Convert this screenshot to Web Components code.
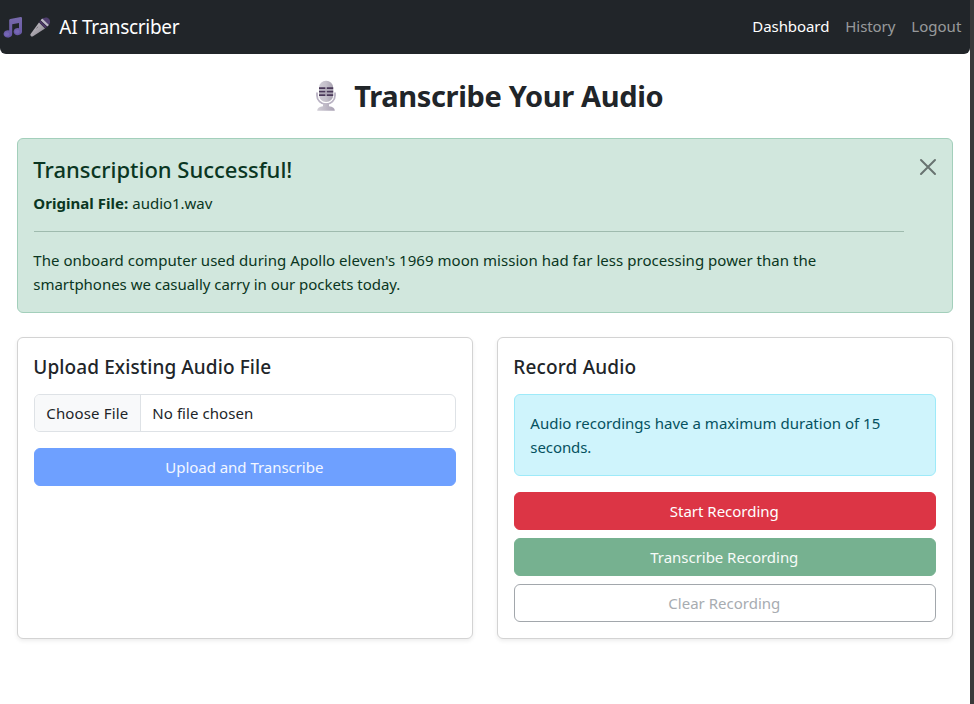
<!DOCTYPE html>
<html lang="en">
<head>
<meta charset="utf-8">
<title>AI Transcriber</title>
<style>
html,body{margin:0;height:100%}
body{background:#3a3a3a;font-family:"Noto Sans","Open Sans",sans-serif;font-size:15px;line-height:24px;color:#212529;overflow:hidden}
</style>
</head>
<body>
<transcriber-app></transcriber-app>
<script>
const define = (name, html, setup) => customElements.define(name, class extends HTMLElement {
  constructor() {
    super();
    this.attachShadow({ mode: 'open' }).innerHTML = html;
  }
  connectedCallback() { if (setup) setup(this); }
});

/* A single line of text tracked to a set width. */
define('fit-text', `<style>:host{display:inline-block;white-space:nowrap;vertical-align:top;margin:0 .7px 0 -.7px}</style><slot></slot>`, el => {
  const target = parseFloat(el.getAttribute('w'));
  const natural = el.getBoundingClientRect().width;
  el.style.letterSpacing = ((target - natural) / el.textContent.length) + 'px';
  el.style.width = target + 'px';
});

define('note-icon', `<style>:host{display:block;width:20px;height:21px}svg{display:block}</style>
<svg width="20" height="21" viewBox="0 0 20 21"><defs><linearGradient id="g" x1="0" y1="0" x2="0" y2="1"><stop offset="0" stop-color="#7769ab"/><stop offset="1" stop-color="#6656a6"/></linearGradient></defs>
<path fill="url(#g)" d="M6.2 3.2Q6.2 2.1 7.3 1.9L17.7.1Q19 0 19 1.2V14.3A4.2 3.6 0 1 1 16 11.2V6L9.2 7.2V16.7A4.3 3.7 0 1 1 6.2 13.4Z"/>
<ellipse cx="3.8" cy="17.2" rx="2.4" ry="2" fill="#8272c3" opacity=".5"/><ellipse cx="14.2" cy="14.8" rx="2.4" ry="2" fill="#8272c3" opacity=".5"/></svg>`);

define('mic-icon', `<style>:host{display:block;width:21px;height:20px}svg{display:block}</style>
<svg width="21" height="20" viewBox="0 0 21 20"><defs><linearGradient id="g" x1="0" y1="0" x2="1" y2="1"><stop offset="0" stop-color="#c8c5cb"/><stop offset="1" stop-color="#87828c"/></linearGradient></defs>
<path d="M9 5.6 15 11.6 3 19.2Q1.7 19.8.8 18.9T.6 16.9Z" fill="url(#g)"/>
<path d="M11 3.2Q13.2-.2 17 .5 20.5 1.8 20 5.7 19.4 8.7 16.8 9.3Z" fill="#4f3e6e"/>
<path d="M12.2 1.5 18.9 8 17.4 9.6 10.6 3.2Z" fill="#bdb8c6"/><path d="M10.3 3.6 17 9.9 15.2 11.2 9.2 5.3Z" fill="#4b3566"/><path d="M6.5 11.3 8.2 9.7" stroke="#77727c" stroke-width="1"/></svg>`);

define('studio-mic', `<style>:host{display:block;width:22px;height:31px}svg{display:block}</style>
<svg width="22" height="31" viewBox="0 0 22 31"><defs><linearGradient id="g" x1="0" x2="1"><stop offset="0" stop-color="#cfccd4"/><stop offset=".5" stop-color="#c5c1cb"/><stop offset="1" stop-color="#a6a0af"/></linearGradient><linearGradient id="b" x1="0" x2="1"><stop offset="0" stop-color="#d2cfd7"/><stop offset="1" stop-color="#aaa2b4"/></linearGradient></defs>
<path d="M2 13.2V15.4A9 8.8 0 0 0 20 15.4V13.2" fill="none" stroke="#b9b2c3" stroke-width="1.8" stroke-linecap="round"/>
<path d="M8 23.5H14V26.2Q19.8 27 19.8 30.7H2.2Q2.2 27 8 26.2Z" fill="url(#b)"/>
<rect x="4" y=".8" width="14.2" height="21.2" rx="7" fill="url(#g)"/>
<path d="M4 8.2H10.4M11.7 8.2H18.2M4 11.7H10.4M11.7 11.7H18.2M4 15.2H10.4M11.7 15.2H18.2" stroke="#493858" stroke-width="1.8"/><path d="M4 9.9H18.2M4 13.4H18.2" stroke="#a49dad" stroke-width=".8"/></svg>`);

define('nav-link', `<style>:host{display:block;color:rgba(255,255,255,.55)}:host([active]){color:#fff}</style><slot></slot>`);

define('nav-bar', `<style>
:host{display:flex;align-items:center;height:54px;box-sizing:border-box;padding:0 8px 0 3px;background:#212529;border-radius:0 0 6px 6px;color:#fff}
.brand{font-size:19px;line-height:30px;margin-left:9px;flex:1}
mic-icon{margin-left:7px}
nav{display:flex;gap:16px;padding-bottom:2px}
</style>
<note-icon></note-icon><mic-icon></mic-icon><div class="brand"><fit-text w="120">AI Transcriber</fit-text></div>
<nav><nav-link active><fit-text w="77">Dashboard</fit-text></nav-link><nav-link><fit-text w="50">History</fit-text></nav-link><nav-link><fit-text w="50">Logout</fit-text></nav-link></nav>`);

define('success-alert', `<style>
:host{display:flex;box-sizing:border-box;height:175px;padding:16px 15px 16px 16px;border:1px solid #a3cfbb;border-radius:6px;background:#d1e7dd;color:#0a3622;margin-bottom:24px}
.body{width:870px}
h4{margin:0 0 8px;font-size:22px;line-height:28px;font-weight:500}
p{margin:0;height:24px}
b{font-weight:700;margin-right:4px}
hr{margin:16px 0;border:0;border-top:1px solid #0a3622;opacity:.25}
svg{margin:3px 0 0 15px;flex:none}
</style>
<div class="body"><h4><fit-text w="259">Transcription Successful!</fit-text></h4>
<p><b><fit-text w="95">Original File:</fit-text></b><fit-text w="80">audio1.wav</fit-text></p><hr>
<p><fit-text w="783">The onboard computer used during Apollo eleven's 1969 moon mission had far less processing power than the</fit-text></p>
<p><fit-text w="367">smartphones we casually carry in our pockets today.</fit-text></p></div>
<svg width="18" height="18" viewBox="0 0 18 18"><path d="M2 2 16 16M16 2 2 16" stroke="#687370" stroke-width="2" stroke-linecap="round"/></svg>`);

define('panel-card', `<style>
:host{display:block;flex:1;box-sizing:border-box;height:302px;padding:16px;border:1px solid #d3d3d3;border-radius:6px;background:#fff;box-shadow:0 2px 4px rgba(0,0,0,.075)}
</style><slot></slot>`);

define('card-title', `<style>:host{display:block;box-sizing:border-box;font-size:19px;line-height:24px;font-weight:500;height:25px;padding-top:1px;margin-bottom:15px}</style><slot></slot>`);

define('file-field', `<style>
:host{display:flex;box-sizing:border-box;height:38px;border:1px solid #dee2e6;border-radius:6px;margin-bottom:16px;line-height:36px;overflow:hidden}
.pick{background:#f8f9fa;border-right:1px solid #dee2e6;width:93px;padding-left:12px;flex:none}
.name{padding-left:12px}
</style><div class="pick"><fit-text w="82">Choose File</fit-text></div><div class="name"><fit-text w="101">No file chosen</fit-text></div>`);

define('action-button', `<style>
:host{display:block;box-sizing:border-box;height:38px;border:1px solid var(--edge,var(--bg));border-radius:6px;background:var(--bg);color:var(--ink,#fff);line-height:36px;text-align:center;margin-bottom:8px}
:host([kind=primary]){--bg:#6ea0ff;--ink:#f3f7ff}
:host([kind=danger]){--bg:#dc3545}
:host([kind=success]){--bg:#76b190;--ink:#f6fbf8}
:host([kind=outline]){--bg:#fff;--edge:#a2a7ac;--ink:#a7acb1}
</style><slot></slot>`);

define('info-note', `<style>
:host{display:block;box-sizing:border-box;height:82px;padding:16px;border:1px solid #9eeaf9;border-radius:6px;background:#cff4fc;color:#055160;margin-bottom:16px}
div{height:24px}
</style><div><fit-text w="350">Audio recordings have a maximum duration of 15</fit-text></div><div><fit-text w="61">seconds.</fit-text></div>`);

define('page-title', `<style>
:host{display:flex;justify-content:center;height:36px;margin-bottom:24px;padding-left:9px}
h2{margin:0 0 0 18px;font-size:29px;line-height:36px;font-weight:700}
studio-mic{margin-top:2px}
</style><studio-mic></studio-mic><h2><fit-text w="309">Transcribe Your Audio</fit-text></h2>`);

define('transcriber-app', `<style>
:host{display:block;width:970px;height:704px;background:#fff}
main{padding:24px 17px 0}
.row{display:flex;gap:24px}
</style>
<nav-bar></nav-bar>
<main><page-title></page-title><success-alert></success-alert>
<div class="row">
<panel-card><card-title><fit-text w="238">Upload Existing Audio File</fit-text></card-title><file-field></file-field><action-button kind="primary"><fit-text w="158">Upload and Transcribe</fit-text></action-button></panel-card>
<panel-card><card-title><fit-text w="123">Record Audio</fit-text></card-title><info-note></info-note><action-button kind="danger"><fit-text w="109">Start Recording</fit-text></action-button><action-button kind="success"><fit-text w="148">Transcribe Recording</fit-text></action-button><action-button kind="outline"><fit-text w="112">Clear Recording</fit-text></action-button></panel-card>
</div></main>`);
</script>
</body>
</html>
